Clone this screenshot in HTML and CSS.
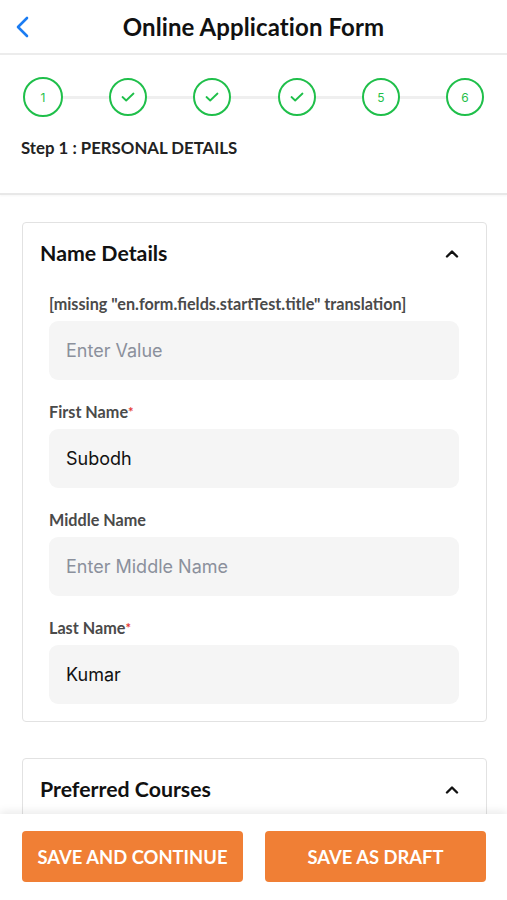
FILE: index.html
```html
<!DOCTYPE html>
<html>
<head>
<meta charset="utf-8">
<link rel="stylesheet" href="styles.css">
</head>
<body>
<div class="app">
  <header class="topbar">
    <span class="back">
      <svg width="16" height="24" viewBox="0 0 16 24"><path d="M12 3 L3 12 L12 21" fill="none" stroke="#1b7cf2" stroke-width="2.6" stroke-linecap="round" stroke-linejoin="round"/></svg>
    </span>
    <h1 class="title">Online Application Form</h1>
  </header>

  <section class="stepper">
    <div class="steps">
      <div class="step active">1</div>
      <div class="line"></div>
      <div class="step"><svg width="14" height="10" viewBox="0 0 14 10"><path d="M1.5 5 L5.2 8.5 L12.5 1.5" fill="none" stroke="#1fbf4a" stroke-width="1.8" stroke-linecap="round" stroke-linejoin="round"/></svg></div>
      <div class="line"></div>
      <div class="step"><svg width="14" height="10" viewBox="0 0 14 10"><path d="M1.5 5 L5.2 8.5 L12.5 1.5" fill="none" stroke="#1fbf4a" stroke-width="1.8" stroke-linecap="round" stroke-linejoin="round"/></svg></div>
      <div class="line"></div>
      <div class="step"><svg width="14" height="10" viewBox="0 0 14 10"><path d="M1.5 5 L5.2 8.5 L12.5 1.5" fill="none" stroke="#1fbf4a" stroke-width="1.8" stroke-linecap="round" stroke-linejoin="round"/></svg></div>
      <div class="line"></div>
      <div class="step">5</div>
      <div class="line"></div>
      <div class="step">6</div>
    </div>
    <div class="step-title">Step 1 : PERSONAL DETAILS</div>
  </section>

  <main class="content">
    <div class="card">
      <div class="card-head">
        <span class="card-title">Name Details</span>
        <svg class="chev" width="14" height="9" viewBox="0 0 14 9"><path d="M2 7.5 L7 2.5 L12 7.5" fill="none" stroke="#111" stroke-width="2.4" stroke-linecap="round" stroke-linejoin="round"/></svg>
      </div>
      <div class="field first">
        <div class="label">[missing "en.form.fields.startTest.title" translation]</div>
        <div class="input placeholder">Enter Value</div>
      </div>
      <div class="field">
        <div class="label">First Name<span class="req">*</span></div>
        <div class="input">Subodh</div>
      </div>
      <div class="field">
        <div class="label">Middle Name</div>
        <div class="input placeholder">Enter Middle Name</div>
      </div>
      <div class="field">
        <div class="label">Last Name<span class="req">*</span></div>
        <div class="input">Kumar</div>
      </div>
    </div>

    <div class="card card-collapsed">
      <div class="card-head">
        <span class="card-title">Preferred Courses</span>
        <svg class="chev" width="14" height="9" viewBox="0 0 14 9"><path d="M2 7.5 L7 2.5 L12 7.5" fill="none" stroke="#111" stroke-width="2.4" stroke-linecap="round" stroke-linejoin="round"/></svg>
      </div>
    </div>
  </main>

  <footer class="footer">
    <button class="btn">SAVE AND CONTINUE</button>
    <button class="btn">SAVE AS DRAFT</button>
  </footer>
</div>
</body>
</html>
```

FILE: styles.css
```css
* { box-sizing: border-box; }
html, body { margin: 0; padding: 0; background: #fff; }
body { font-family: Lato, "Noto Sans", sans-serif; color: #111; }

.app {
  height: 900px;
  display: flex;
  flex-direction: column;
  overflow: hidden;
}

.topbar {
  height: 55px;
  flex: none;
  display: flex;
  align-items: center;
  justify-content: center;
  position: relative;
  border-bottom: 2px solid #ececec;
}
.back {
  position: absolute;
  left: 15px;
  top: 15px;
  display: flex;
}
.title {
  margin: 0;
  font-size: 24px;
  font-weight: 700;
  color: #111;
  letter-spacing: 0.1px;
}

.stepper {
  flex: none;
  height: 140px;
  padding: 22px 23px 0 23px;
  border-bottom: 2px solid #e8e8e8;
  box-shadow: 0 1px 2px rgba(0,0,0,0.04);
}
.steps {
  display: flex;
  align-items: center;
}
.step {
  flex: none;
  width: 38px;
  height: 38px;
  border: 2.5px solid #1fbf4a;
  border-radius: 50%;
  display: flex;
  align-items: center;
  justify-content: center;
  font-family: Inter, "Noto Sans", sans-serif;
  font-size: 12px;
  color: #1fbf4a;
}
.step.active {
  width: 40px;
  height: 40px;
}
.line {
  flex: 1;
  height: 3px;
  background: #efefef;
}
.step-title {
  margin-top: 21px;
  margin-left: -2px;
  font-size: 16.8px;
  font-weight: 700;
  color: #222;
  line-height: 20px;
}

.content {
  flex: 1;
  overflow: hidden;
  padding: 27px 20px 0 22px;
  display: flex;
  flex-direction: column;
  gap: 36px;
}

.card {
  flex: none;
  border: 1.5px solid #e2e2e2;
  border-radius: 4px;
  padding: 17px 27px 17px 17px;
}
.card-collapsed {
  min-height: 120px;
}
.card-head {
  display: flex;
  align-items: center;
  justify-content: space-between;
  height: 26px;
}
.card-title {
  font-size: 21.3px;
  font-weight: 700;
  color: #111;
}

.field {
  margin-left: 9px;
  margin-top: 23px;
}
.field.first { margin-top: 29px; }
.label {
  font-size: 16.2px;
  font-weight: 700;
  color: #4a4a4a;
  line-height: 18px;
  margin-bottom: 8px;
  white-space: nowrap;
}
.req { color: #e53935; font-size: 13px; vertical-align: top; }
.input {
  height: 59px;
  background: #f5f5f5;
  border-radius: 9px;
  display: flex;
  align-items: center;
  padding-left: 17px;
  font-family: Inter, "Noto Sans", sans-serif;
  font-size: 18px;
  color: #111;
}
.input.placeholder { color: #8b909c; }

.footer {
  flex: none;
  height: 86px;
  display: flex;
  gap: 22px;
  padding: 17px 21px 18px 22px;
  background: #fff;
  box-shadow: 0 -3px 8px rgba(0,0,0,0.08);
  position: relative;
}
.btn {
  flex: 1;
  height: 51px;
  padding: 0;
  border: none;
  border-radius: 4px;
  background: #f07f35;
  color: #fff;
  font-family: Lato, "Noto Sans", sans-serif;
  font-size: 18.4px;
  line-height: 24px;
  font-weight: 700;
  white-space: nowrap;
}
```
